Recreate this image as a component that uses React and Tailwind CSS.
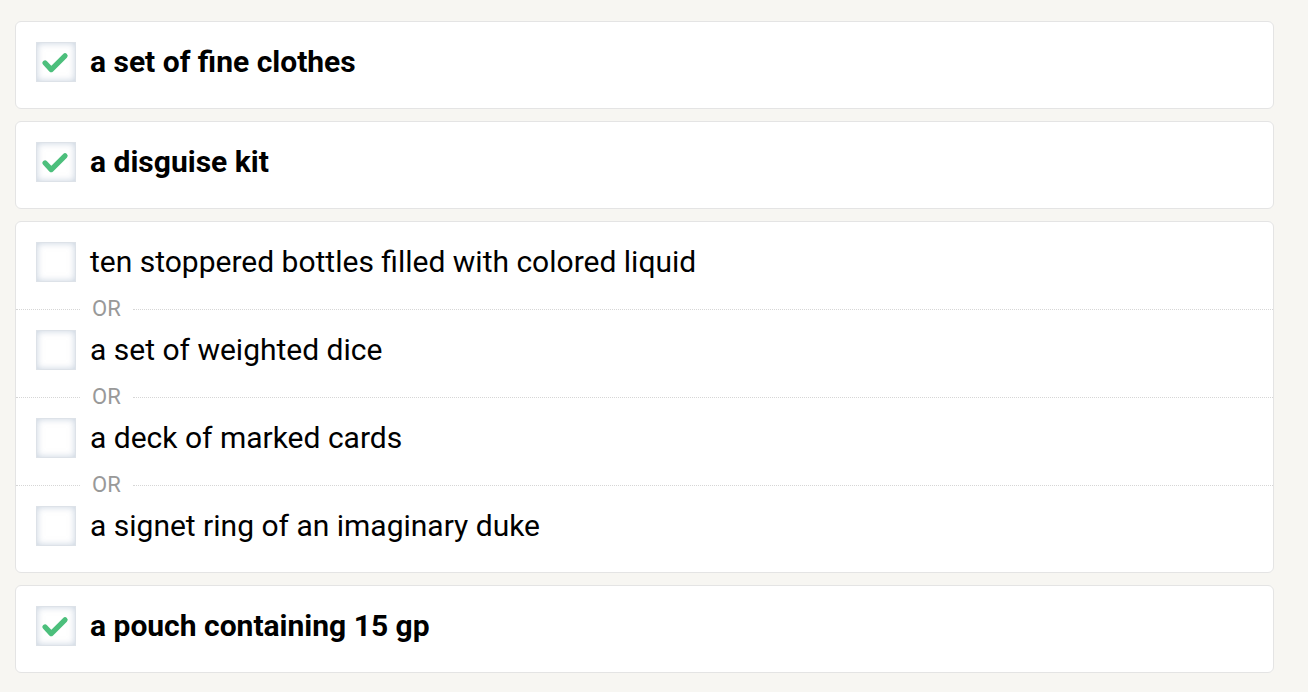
import React from 'react';

const groups = [
  { options: [{ text: 'a set of fine clothes', checked: true }] },
  { options: [{ text: 'a disguise kit', checked: true }] },
  {
    options: [
      { text: 'ten stoppered bottles filled with colored liquid', checked: false },
      { text: 'a set of weighted dice', checked: false },
      { text: 'a deck of marked cards', checked: false },
      { text: 'a signet ring of an imaginary duke', checked: false },
    ],
  },
  { options: [{ text: 'a pouch containing 15 gp', checked: true }] },
];

const CheckBox = ({ checked }) => (
  <div className="w-10 h-10 shrink-0 bg-white border border-[#dde2e8] shadow-[inset_0_0_7px_rgba(160,178,200,0.6)] flex items-center justify-center">
    {checked && (
      <svg viewBox="0 0 40 40" className="w-10 h-10">
        <path d="M8.5 21l6.5 7L29.5 13.5" fill="none" stroke="#4cbf7c" strokeWidth="5.5" strokeLinecap="round" strokeLinejoin="round" />
      </svg>
    )}
  </div>
);

const OrDivider = () => (
  <div className="-mx-5 pt-5 pb-[14px]">
    <div className="flex items-center h-[14px]">
      <div className="w-[64px] border-t border-dotted border-[#d6d6d6]" />
      <span className="px-3 text-[22px] leading-none text-[#999999]">OR</span>
      <div className="flex-1 border-t border-dotted border-[#d6d6d6]" />
    </div>
  </div>
);

const Option = ({ text, checked }) => (
  <div className="flex items-center gap-[14px] h-10">
    <CheckBox checked={checked} />
    <span className={`text-[30px] leading-none text-black ${checked ? 'font-bold' : 'font-normal'}`}>{text}</span>
  </div>
);

export default function App() {
  return (
    <div className="min-h-screen bg-[#f7f6f2] pl-[15px] pr-[34px] pt-[21px] pb-5 font-['Roboto',sans-serif]">
      <div className="flex flex-col gap-3">
        {groups.map((group, gi) => (
          <div key={gi} className="bg-white border border-[#e4e4e4] rounded-md px-5 pt-5 pb-[26px]">
            {group.options.map((opt, oi) => (
              <React.Fragment key={opt.text}>
                {oi > 0 && <OrDivider />}
                <Option text={opt.text} checked={opt.checked} />
              </React.Fragment>
            ))}
          </div>
        ))}
      </div>
    </div>
  );
}
